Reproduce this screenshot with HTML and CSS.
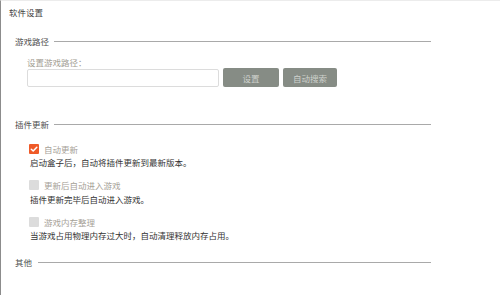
FILE: index.html
```html
<!DOCTYPE html>
<html lang="zh-CN">
<head>
<meta charset="utf-8">
<title>软件设置</title>
<link rel="stylesheet" href="styles.css">
</head>
<body>
<div class="window">
  <div class="title">软件设置</div>

  <div class="section">
    <div class="heading heading-first"><span>游戏路径</span><i class="rule"></i></div>
    <div class="path-label">设置游戏路径：</div>
    <div class="path-row">
      <input class="path-input" type="text">
      <button class="btn btn-set">设置</button>
      <button class="btn btn-search">自动搜索</button>
    </div>
  </div>

  <div class="section">
    <div class="heading heading-plugin"><span>插件更新</span><i class="rule"></i></div>
    <div class="options">
      <div class="option">
        <div class="check-row">
          <span class="box box-on"><svg viewBox="0 0 10 10" width="10" height="10"><path d="M2.3 5.2 L4.2 7 L7.8 3.2" fill="none" stroke="#fff" stroke-width="1.5" stroke-linecap="round" stroke-linejoin="round"/></svg></span>
          <span class="check-label">自动更新</span>
        </div>
        <div class="desc">启动盒子后，自动将插件更新到最新版本。</div>
      </div>
      <div class="option">
        <div class="check-row">
          <span class="box"></span>
          <span class="check-label">更新后自动进入游戏</span>
        </div>
        <div class="desc desc-2">插件更新完毕后自动进入游戏。</div>
      </div>
      <div class="option">
        <div class="check-row">
          <span class="box"></span>
          <span class="check-label">游戏内存整理</span>
        </div>
        <div class="desc">当游戏占用物理内存过大时，自动清理释放内存占用。</div>
      </div>
    </div>
  </div>

  <div class="section">
    <div class="heading heading-other"><span>其他</span><i class="rule"></i></div>
  </div>
</div>
</body>
</html>
```

FILE: styles.css
```css
* { box-sizing: border-box; }
html, body {
  margin: 0;
  padding: 0;
  background: #fff;
}
body {
  font-family: "Noto Sans CJK SC", "Noto Sans", sans-serif;
  font-size: 8.5px;
  line-height: 12px;
  color: #333;
}
.window {
  width: 500px;
  height: 295px;
  border-left: 1px solid #8c8c8c;
  border-top: 1px solid #ececec;
  padding: 5px 0 0 8px;
}
.title {
  color: #3f3f3f;
}
.section {
  margin-left: 6px;
  width: 416px;
}
.heading {
  display: flex;
  align-items: center;
  gap: 5px;
  color: #4f4f4f;
  height: 12px;
}
.heading .rule {
  flex: 1;
  height: 1px;
  background: #a9a9a9;
}
.heading-first { margin-top: 17px; }
.heading-plugin { margin-top: 31px; }
.heading-other { margin-top: 15px; }
.heading-other { gap: 6px; }

.path-label {
  margin: 9px 0 0 12px;
  color: #a29d92;
}
.path-row {
  display: flex;
  gap: 4px;
  margin: 1px 0 0 12px;
  height: 18px;
}
.path-input {
  width: 192px;
  height: 18px;
  margin: 0;
  border: 1px solid #dcdcdc;
  border-radius: 2px;
  background: #fff;
  padding: 0 4px;
  font: inherit;
}
.btn {
  height: 19px;
  margin: -1px 0 0 0;
  border: 0;
  border-radius: 2px;
  background: #868c85;
  color: #cfd2cd;
  font: inherit;
  padding: 0;
}
.btn-set { width: 56px; }
.btn-search { width: 54px; }

.options {
  margin: 13px 0 0 14px;
  display: flex;
  flex-direction: column;
  gap: 11px;
}
.check-row {
  display: flex;
  align-items: center;
  gap: 5px;
  height: 12px;
}
.box {
  width: 10px;
  height: 10px;
  border-radius: 1px;
  background: #dcdcdc;
  display: block;
}
.box svg { display: block; }
.box-on { background: #ef5a28; }
.check-label {
  color: #a6a197;
}
.desc {
  margin-top: 1px;
  padding-left: 1px;
  color: #333;
}
.desc-2 { margin-top: 2px; }
```
